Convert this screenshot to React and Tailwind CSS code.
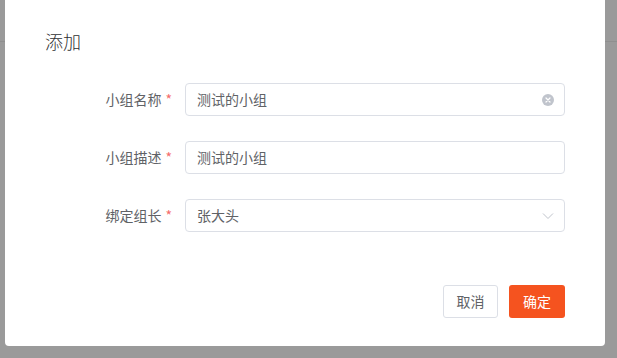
import React from 'react'

const font = { fontFamily: '"Noto Sans CJK SC", "Noto Sans", sans-serif' }

function ClearIcon() {
  return (
    <svg width="12" height="12" viewBox="0 0 12 12" className="shrink-0">
      <circle cx="6" cy="6" r="6" fill="#c0c4cc" />
      <path d="M4 4 L8 8 M8 4 L4 8" stroke="#fff" strokeWidth="1.2" strokeLinecap="round" />
    </svg>
  )
}

function Chevron() {
  return (
    <svg width="12" height="8" viewBox="0 0 12 8" className="shrink-0">
      <path d="M1 1.5 L6 6.5 L11 1.5" fill="none" stroke="#c0c4cc" strokeWidth="1" />
    </svg>
  )
}

function Row({ label, value, suffix }) {
  return (
    <div className="flex items-center">
      <div className="w-[140px] pr-[13px] flex justify-end items-center text-[14px] text-[#606266]">
        <span>{label}</span>
        <span className="ml-[4px] text-[#f56c6c]">*</span>
      </div>
      <div className="flex-1 h-[33px] border border-[#dcdfe6] rounded-[4px] flex items-center pl-[11px] pr-[10px] text-[14px] text-[#606266]">
        <span className="flex-1">{value}</span>
        {suffix}
      </div>
    </div>
  )
}

export default function App() {
  return (
    <div className="relative w-[617px] h-[358px] overflow-hidden bg-[#9a9a9a]" style={font}>
      <div className="h-[42px] border-b border-[#8f8f8f]" />
      <div className="absolute left-[5px] top-[-3px] w-[600px] h-[349px] bg-white rounded-[4px] pt-[32px] pl-[40px] pr-[40px]">
        <div className="text-[18px] leading-[24px] font-light text-[#303133]">添加</div>
        <div className="mt-[30px] flex flex-col gap-[25px]">
          <Row label="小组名称" value="测试的小组" suffix={<ClearIcon />} />
          <Row label="小组描述" value="测试的小组" />
          <Row label="绑定组长" value="张大头" suffix={<Chevron />} />
        </div>
        <div className="mt-[53px] flex justify-end gap-[11px]">
          <button className="w-[55px] h-[33px] border border-[#dcdfe6] rounded-[3px] bg-white text-[14px] text-[#606266]">
            取消
          </button>
          <button className="w-[56px] h-[33px] rounded-[3px] bg-[#f5531f] text-[14px] text-white">
            确定
          </button>
        </div>
      </div>
    </div>
  )
}
